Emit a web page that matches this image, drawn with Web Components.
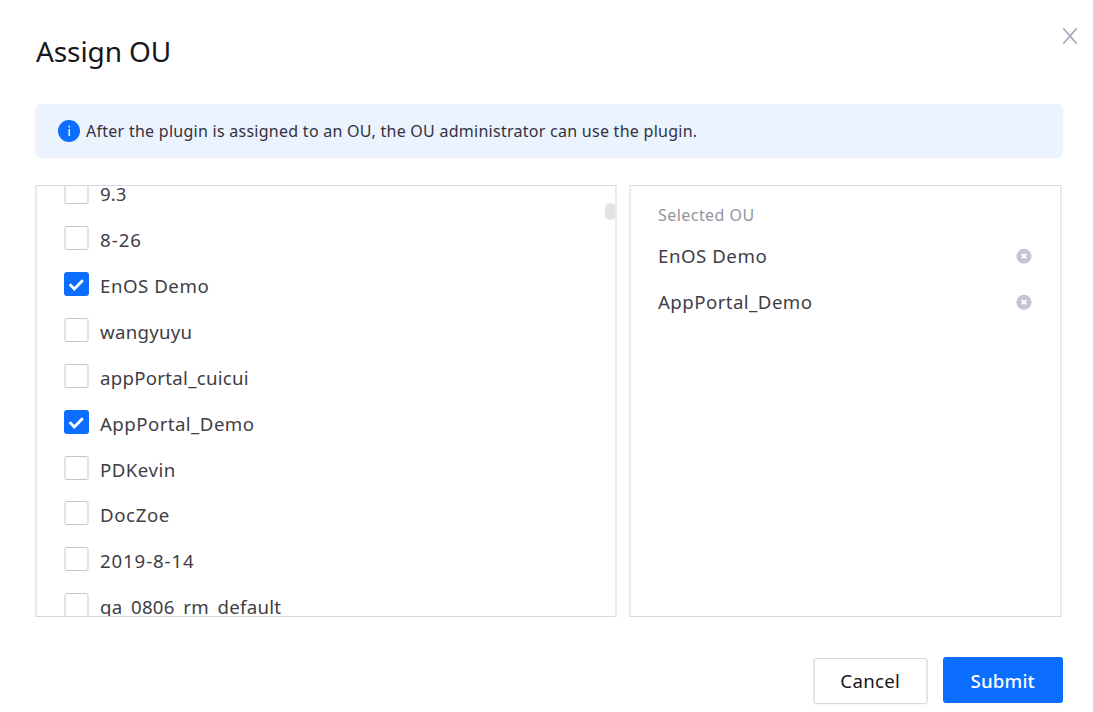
<!DOCTYPE html>
<html lang="en">
<head>
<meta charset="utf-8">
<title>Assign OU</title>
<style>
html,body{margin:0;height:100%;overflow:hidden;background:#fff}
body{font-family:"Noto Sans","Open Sans",sans-serif;color:#3f3e47}
</style>
</head>
<body>
<ou-dialog>
  <span slot="title">Assign OU</span>
  <ou-alert>After the plugin is assigned to an OU, the OU administrator can use the plugin.</ou-alert>
  <ou-panel slot="list" scroll>
    <ou-option>9.3</ou-option>
    <ou-option style="--ls:1px">8-26</ou-option>
    <ou-option checked style="--ls:.53px">EnOS Demo</ou-option>
    <ou-option style="--ls:.25px">wangyuyu</ou-option>
    <ou-option style="--ls:.27px">appPortal_cuicui</ou-option>
    <ou-option checked style="--ls:.44px">AppPortal_Demo</ou-option>
    <ou-option style="--ls:.46px">PDKevin</ou-option>
    <ou-option style="--ls:.6px">DocZoe</ou-option>
    <ou-option style="--ls:.86px">2019-8-14</ou-option>
    <ou-option style="--ls:.26px">qa_0806_rm_default</ou-option>
  </ou-panel>
  <ou-panel slot="selected" heading="Selected OU">
    <ou-chosen style="--ls:.53px">EnOS Demo</ou-chosen>
    <ou-chosen style="--ls:.44px">AppPortal_Demo</ou-chosen>
  </ou-panel>
  <ou-button slot="actions">Cancel</ou-button>
  <ou-button slot="actions" primary>Submit</ou-button>
</ou-dialog>
<script>
const define = (name, html) => customElements.define(name, class extends HTMLElement {
  constructor() {
    super();
    this.attachShadow({mode: 'open'}).innerHTML = html;
  }
  connectedCallback() {
    const h = this.shadowRoot.querySelector('[data-heading]');
    if (h && this.hasAttribute('heading')) h.textContent = this.getAttribute('heading');
  }
});

define('ou-dialog', `<style>
:host{display:flex;flex-direction:column;box-sizing:border-box;height:712px;padding:0 30.5px 0 35px}
header{display:flex;justify-content:space-between;height:104px;flex:none}
h1{margin:31px 0 0 1px;font-size:28px;line-height:40px;font-weight:400;color:#17161c;letter-spacing:-.1px}
.close{width:16px;height:18px;margin:27px -15.5px 0 0}
.columns{display:grid;grid-template-columns:582px 433px;gap:12px;height:432px;margin-top:27px}
footer{display:flex;justify-content:flex-end;gap:16px;margin-top:40px}
</style>
<header><h1><slot name="title"></slot></h1>
<svg class="close" viewBox="0 0 16 18"><path d="M1.3 1.2 14.7 16.8M14.7 1.2 1.3 16.8" fill="none" stroke="#a6a5b5" stroke-width="1.7"/></svg></header>
<slot></slot>
<div class="columns"><slot name="list"></slot><slot name="selected"></slot></div>
<footer><slot name="actions"></slot></footer>`);

define('ou-alert', `<style>
:host{display:flex;align-items:center;gap:6.5px;height:53.5px;flex:none;border-radius:6px;background:#ebf3ff;padding-left:22.5px;box-sizing:border-box;font-size:16px;line-height:24px;color:#33323d;letter-spacing:.265px}
svg{width:22px;height:22px;flex:none}
</style>
<svg viewBox="0 0 22 22"><circle cx="11" cy="11" r="11" fill="#0b6eff"/><path d="M11.2 5.7v1.7M11.2 9v7" stroke="#fff" stroke-width="1.4"/></svg>
<span><slot></slot></span>`);

define('ou-panel', `<style>
:host{display:flex;position:relative;flex-direction:column;box-sizing:border-box;overflow:hidden;border:solid #e9e9f0;border-width:1px 2px;border-top-color:#d8d8e2;border-bottom-color:#d8d8e2;padding:17px 27px 0}
:host([scroll]){padding-top:0}
:host([scroll]) .body{margin-top:-15.2px}
.heading{height:24px;font-size:16px;line-height:24px;color:#94939f;margin-bottom:6px;letter-spacing:.45px}
:host([scroll]) .heading{display:none}
.thumb{display:none;position:absolute;right:-1px;top:17px;width:11px;height:17px;border-radius:5.5px;background:#e3e3e3}
:host([scroll]) .thumb{display:block}
</style>
<div class="heading" data-heading></div><div class="body"><slot></slot></div><i class="thumb"></i>`);

define('ou-option', `<style>
:host{display:flex;align-items:center;gap:11px;height:45.88px;font-size:18.67px;line-height:28px}
.box{display:block;box-sizing:border-box;width:25px;height:24px;flex:none;margin-top:-2px;border:solid #e2e2ea;border-width:1px 2px;border-top-color:#c5c5d3;border-bottom-color:#c5c5d3;border-radius:3px}
svg{display:none;width:25px;height:24px;margin:-1px -2px}
:host([checked]) .box{background:#0b6eff;border-color:#0b6eff}
:host([checked]) svg{display:block}
.label{letter-spacing:var(--ls,0);padding-top:2px;white-space:nowrap}
</style>
<i class="box"><svg viewBox="0 0 25 24"><path d="m5.7 12.3 4.6 4.6 8.5-8.6" fill="none" stroke="#fff" stroke-width="2.8"/></svg></i><span class="label"><slot></slot></span>`);

define('ou-chosen', `<style>
:host{display:flex;align-items:center;justify-content:space-between;height:46px;font-size:18.67px;line-height:28px}
svg{width:16px;height:16px;margin-right:1px}
.label{letter-spacing:var(--ls,0)}
</style><span class="label"><slot></slot></span>
<svg viewBox="0 0 16 16"><circle cx="8" cy="8.2" r="7.5" fill="#c5c4d3"/><path d="m5.6 6 4.8 4.4M10.4 6l-4.8 4.4" stroke="#fff" stroke-width="1.8"/></svg>`);

define('ou-button', `<style>
:host{display:flex;align-items:center;justify-content:center;box-sizing:border-box;width:114.5px;height:46px;margin-top:1px;margin-right:-.5px;border:solid #e4e4ec;border-width:1px 2px;border-top-color:#d8d8e2;border-bottom-color:#d8d8e2;border-radius:3px;box-shadow:0 2px 1px #00000005;font-size:18.67px;line-height:28px;color:#17161c;letter-spacing:.3px}
:host([primary]){width:119.5px;margin:0 0 1px;padding-top:2px;border:0;background:#0b6eff;color:#fff;font-weight:500;letter-spacing:.15px}
</style><span><slot></slot></span>`);
</script>
</body>
</html>
